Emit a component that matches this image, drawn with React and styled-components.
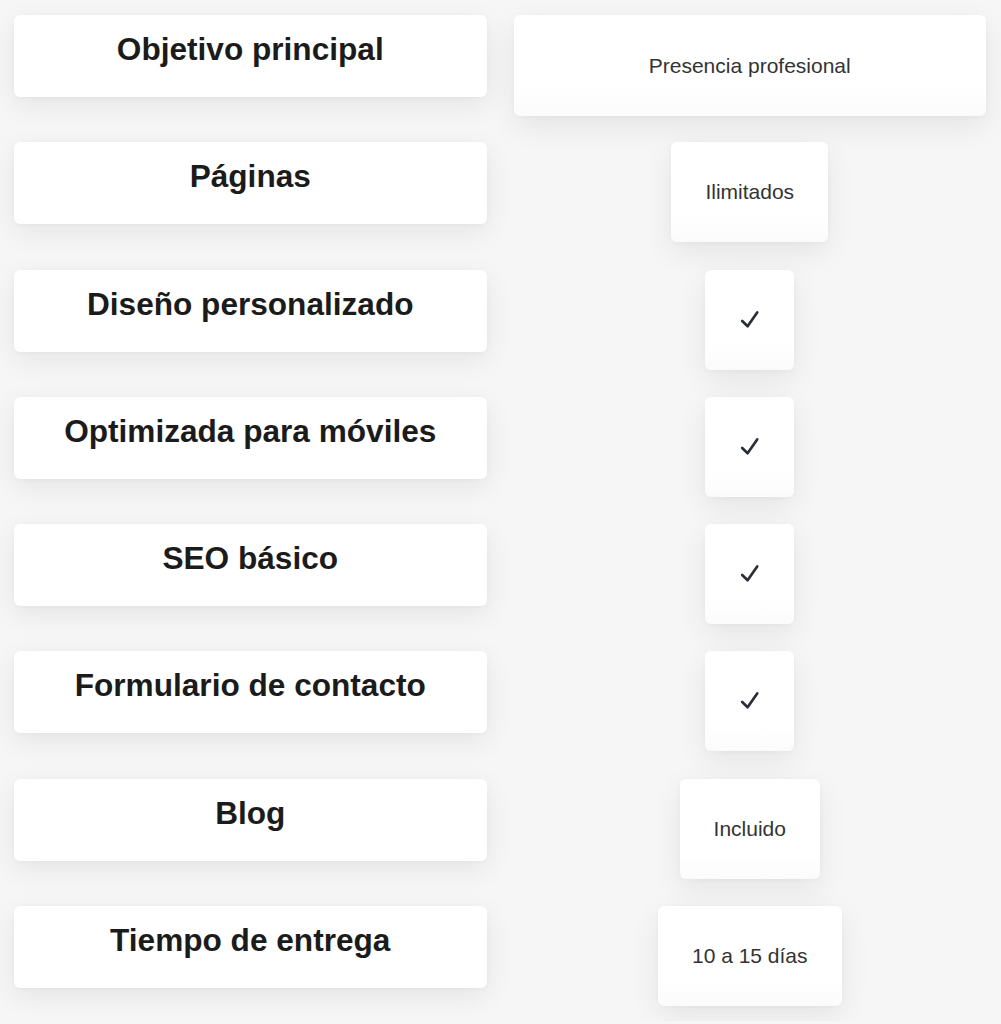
import React from "react";
import styled, { createGlobalStyle } from "styled-components";

const Global = createGlobalStyle`
  html, body { margin: 0; padding: 0; background: #f6f6f6; }
  body { font-family: "Liberation Sans", Arial, Helvetica, sans-serif; }
`;

const Table = styled.div`
  display: grid;
  grid-template-columns: 1fr 1fr;
  column-gap: 27px;
  row-gap: 27.3px;
  padding: 15px 15px 15px 14px;
  grid-auto-rows: 100px;
`;

const FeatureCard = styled.div`
  align-self: start;
  height: 82px;
  box-sizing: border-box;
  background: #ffffff;
  border-radius: 6px;
  box-shadow: 0 8px 28px rgba(0, 0, 0, 0.075), 0 1px 4px rgba(0, 0, 0, 0.03);
  padding: 16px 20px 0;
  text-align: center;
`;

const FeatureTitle = styled.h3`
  margin: 0;
  font-size: 31.6px;
  line-height: 37px;
  font-weight: 700;
  color: #1b1b1b;
`;

const ValueCell = styled.div`
  display: flex;
  justify-content: center;
  align-items: flex-start;
`;

const ValueCard = styled.div`
  box-sizing: border-box;
  height: ${(p) => (p.$wide ? "101px" : "100px")};
  width: ${(p) => (p.$wide ? "100%" : "auto")};
  min-width: 89px;
  padding: 0 34px;
  display: flex;
  align-items: center;
  justify-content: center;
  background: linear-gradient(to bottom, #ffffff 0%, #ffffff 72%, #fbfbfb 100%);
  border-radius: 6px;
  box-shadow: 0 10px 30px rgba(0, 0, 0, 0.075), 0 1px 4px rgba(0, 0, 0, 0.03);
  font-size: 21px;
  color: #333333;
  white-space: nowrap;
`;

const CheckIcon = styled.svg`
  display: block;
  margin-top: -1px;
`;

const Check = () => (
  <CheckIcon width="21" height="21" viewBox="0 0 21 21" aria-hidden="true">
    <path
      d="M3.2 12 L8.6 17.2 L18.2 3.4"
      fill="none"
      stroke="#2c2e35"
      strokeWidth="2.7"
      strokeLinecap="round"
      strokeLinejoin="round"
    />
  </CheckIcon>
);

const rows = [
  { label: "Objetivo principal", value: "Presencia profesional", wide: true },
  { label: "Páginas", value: "Ilimitados" },
  { label: "Diseño personalizado", check: true },
  { label: "Optimizada para móviles", check: true },
  { label: "SEO básico", check: true },
  { label: "Formulario de contacto", check: true },
  { label: "Blog", value: "Incluido" },
  { label: "Tiempo de entrega", value: "10 a 15 días" },
];

export default function App() {
  return (
    <>
      <Global />
      <Table>
        {rows.map((r) => (
          <React.Fragment key={r.label}>
            <FeatureCard>
              <FeatureTitle>{r.label}</FeatureTitle>
            </FeatureCard>
            <ValueCell>
              <ValueCard $wide={r.wide}>{r.check ? <Check /> : r.value}</ValueCard>
            </ValueCell>
          </React.Fragment>
        ))}
      </Table>
    </>
  );
}
